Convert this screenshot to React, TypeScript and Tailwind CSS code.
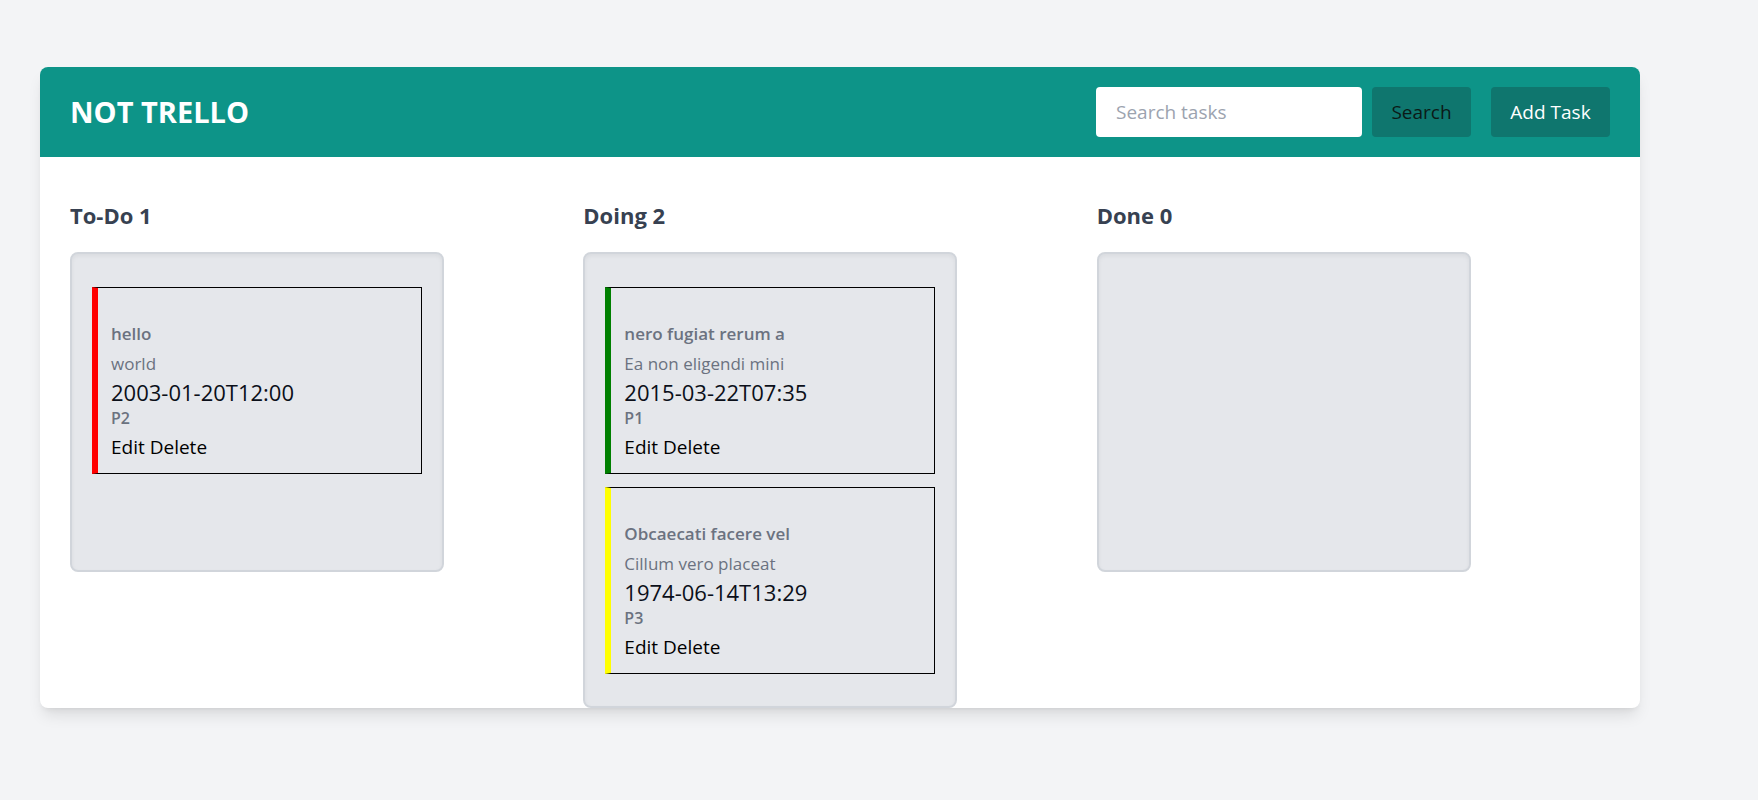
import React from "react";

type Task = {
  title: string;
  desc: string;
  date: string;
  priority: string;
  color: string;
};

const columns: { name: string; tasks: Task[] }[] = [
  {
    name: "To-Do",
    tasks: [
      { title: "hello", desc: "world", date: "2003-01-20T12:00", priority: "P2", color: "border-l-[#ff0000]" },
    ],
  },
  {
    name: "Doing",
    tasks: [
      { title: "nero fugiat rerum a", desc: "Ea non eligendi mini", date: "2015-03-22T07:35", priority: "P1", color: "border-l-[#008000]" },
      { title: "Obcaecati facere vel", desc: "Cillum vero placeat", date: "1974-06-14T13:29", priority: "P3", color: "border-l-[#ffff00]" },
    ],
  },
  { name: "Done", tasks: [] },
];

function Card({ t }: { t: Task }) {
  return (
    <div className={`border border-black border-l-[6px] ${t.color} pl-[13px] pt-[31px] pb-[10px]`}>
      <div className="text-[17px] leading-[30px] font-semibold text-[#6b7280]">{t.title}</div>
      <div className="text-[17px] leading-[30px] text-[#6b7280]">{t.desc}</div>
      <div className="text-[22px] leading-[26px] font-medium text-[#0b0f19]">{t.date}</div>
      <div className="text-[16px] leading-[26px] font-semibold text-[#6b7280]">{t.priority}</div>
      <div className="text-[19px] leading-[32px] text-black">Edit Delete</div>
    </div>
  );
}

export default function App() {
  return (
    <div
      className="min-h-screen bg-[#f3f4f6] pl-10 pt-[67px]"
      style={{ fontFamily: '"Open Sans", "Noto Sans", sans-serif' }}
    >
      <div className="w-[1600px] h-[641px] bg-white rounded-lg shadow-lg">
        <header className="h-[90px] bg-[#0d9488] rounded-t-lg flex items-center justify-between pl-[30px] pr-[30px]">
          <h1 className="text-[29px] font-bold text-white leading-9">NOT TRELLO</h1>
          <div className="flex items-center">
            <input
              placeholder="Search tasks"
              className="w-[266px] h-[50px] bg-white rounded px-5 text-[19px] text-black placeholder:text-[#9ca3af] outline-none"
            />
            <button className="ml-[10px] w-[99px] h-[50px] rounded bg-[#0f766e] text-[19px] text-[#0b1a17]">
              Search
            </button>
            <button className="ml-5 w-[119px] h-[50px] rounded bg-[#0f766e] text-[19px] text-white">
              Add Task
            </button>
          </div>
        </header>
        <div className="grid grid-cols-3 px-[30px] pt-[44px]">
          {columns.map((c) => (
            <div key={c.name}>
              <h2 className="text-[22px] leading-7 font-bold text-[#374151] mb-[23px]">
                {c.name} {c.tasks.length}
              </h2>
              <div className="w-[374px] min-h-[320px] bg-[#e5e7eb] border-2 border-[#d1d5db] rounded-lg shadow-inner px-[20px] pt-[33px] pb-[32px] flex flex-col gap-[13px]">
                {c.tasks.map((t) => (
                  <Card key={t.title} t={t} />
                ))}
              </div>
            </div>
          ))}
        </div>
      </div>
    </div>
  );
}
